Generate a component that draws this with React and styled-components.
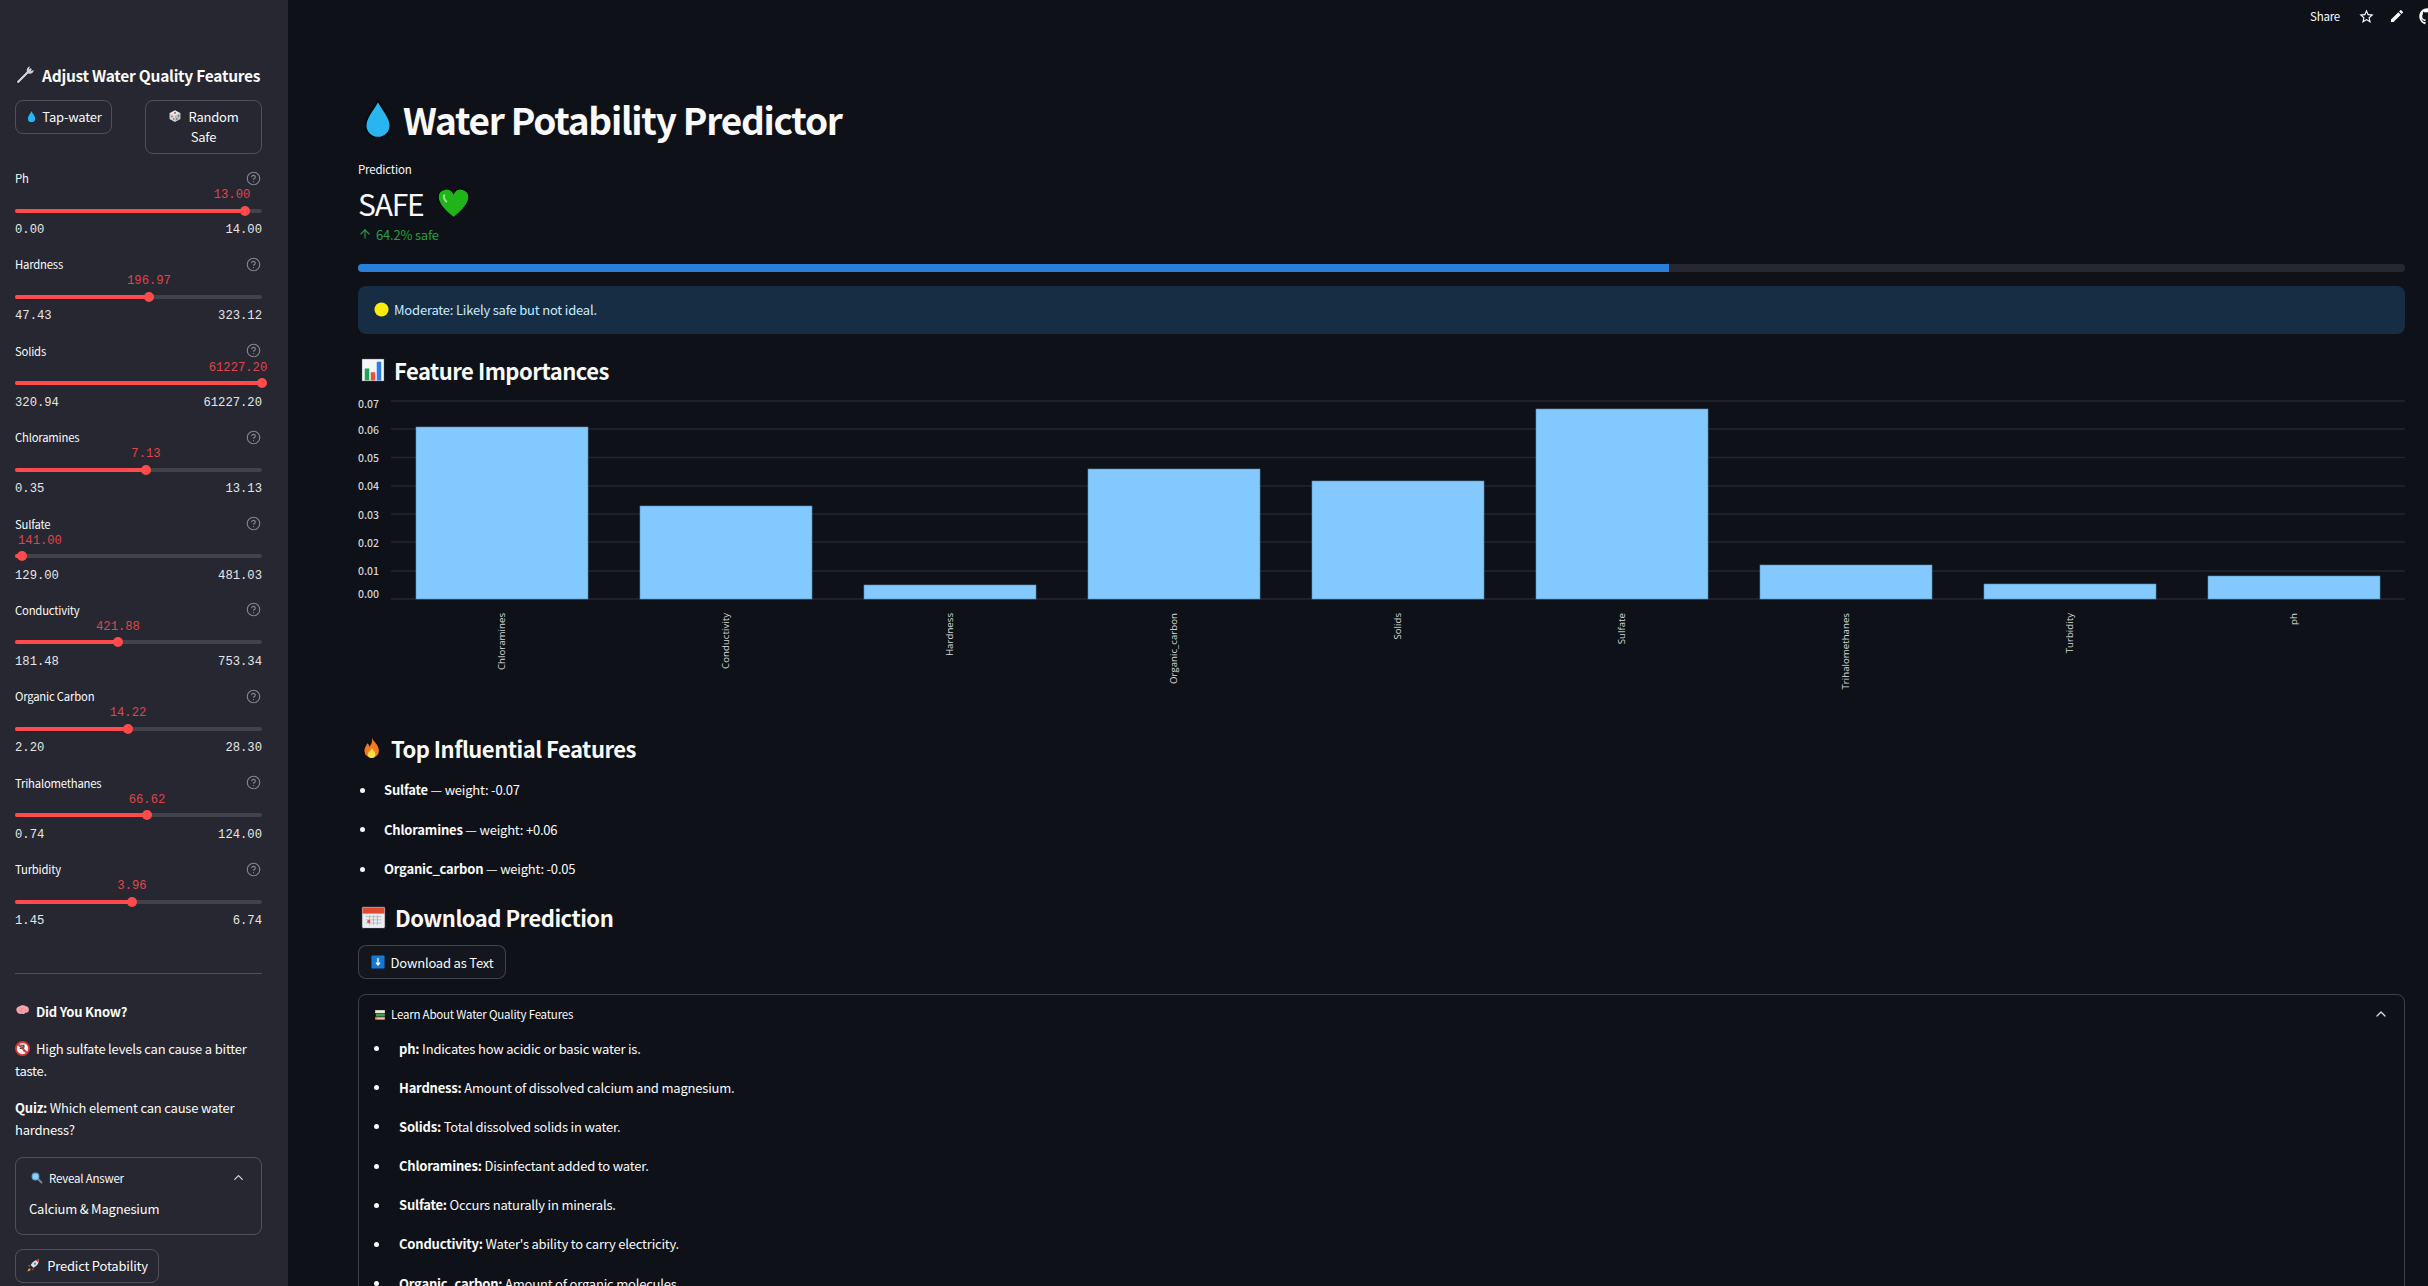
import React from "react";
import styled, { createGlobalStyle } from "styled-components";
import { CircleHelp, ChevronUp, ArrowUp } from "lucide-react";
import { MdEdit, MdStarBorder } from "react-icons/md";
import { FaGithub } from "react-icons/fa";

const sliders = [
  { name: "Ph", value: "13.00", min: "0.00", max: "14.00", thumb: 229.5, label: 217 },
  { name: "Hardness", value: "196.97", min: "47.43", max: "323.12", thumb: 134, label: 134 },
  { name: "Solids", value: "61227.20", min: "320.94", max: "61227.20", thumb: 247, label: 223 },
  { name: "Chloramines", value: "7.13", min: "0.35", max: "13.13", thumb: 130.5, label: 131 },
  { name: "Sulfate", value: "141.00", min: "129.00", max: "481.03", thumb: 7, label: 25 },
  { name: "Conductivity", value: "421.88", min: "181.48", max: "753.34", thumb: 103, label: 103 },
  { name: "Organic Carbon", value: "14.22", min: "2.20", max: "28.30", thumb: 113, label: 113 },
  { name: "Trihalomethanes", value: "66.62", min: "0.74", max: "124.00", thumb: 131.5, label: 132 },
  { name: "Turbidity", value: "3.96", min: "1.45", max: "6.74", thumb: 117, label: 117 },
];

const bars = [
  { name: "Chloramines", top: 427 },
  { name: "Conductivity", top: 506 },
  { name: "Hardness", top: 585 },
  { name: "Organic_carbon", top: 469 },
  { name: "Solids", top: 481 },
  { name: "Sulfate", top: 409 },
  { name: "Trihalomethanes", top: 565 },
  { name: "Turbidity", top: 584 },
  { name: "ph", top: 576 },
];

const ticks = [
  { label: "0.07", line: 401, text: 404 },
  { label: "0.06", line: 429, text: 430 },
  { label: "0.05", line: 457.5, text: 458 },
  { label: "0.04", line: 486, text: 486 },
  { label: "0.03", line: 514, text: 515 },
  { label: "0.02", line: 542, text: 543 },
  { label: "0.01", line: 571, text: 571 },
  { label: "0.00", line: 599, text: 594 },
];

const topFeatures = [
  { name: "Sulfate", weight: "-0.07" },
  { name: "Chloramines", weight: "+0.06" },
  { name: "Organic_carbon", weight: "-0.05" },
];

const glossary = [
  { name: "ph", text: "Indicates how acidic or basic water is." },
  { name: "Hardness", text: "Amount of dissolved calcium and magnesium." },
  { name: "Solids", text: "Total dissolved solids in water." },
  { name: "Chloramines", text: "Disinfectant added to water." },
  { name: "Sulfate", text: "Occurs naturally in minerals." },
  { name: "Conductivity", text: "Water's ability to carry electricity." },
  { name: "Organic_carbon", text: "Amount of organic molecules." },
];

const drawings = {
  drop: (
    <path d="M16 1C13 8 6 14 6 21a10 10 0 0 0 20 0C26 14 19 8 16 1z" fill="#29b6f0" stroke="#06090d" strokeWidth="1.5" />
  ),
  wrench: (
    <>
      <path d="M5 27 25 7" stroke="#15161a" strokeWidth="6" strokeLinecap="round" />
      <path d="M5 27 25 7" stroke="#cfd3d6" strokeWidth="3.5" strokeLinecap="round" />
      <path d="M24 2l-2 5 3 3 5-2c0 4-4 7-8 6l-3-3c-1-4 1-8 5-9z" fill="#cfd3d6" />
    </>
  ),
  dice: (
    <>
      <path d="M16 3l12 6v14l-12 6-12-6V9z" fill="#e9e9e9" />
      <path d="M16 15l12-6v14l-12 6z" fill="#bdbdbd" />
      <path d="M4 9l12 6v14L4 23z" fill="#d4d4d4" />
      <circle cx="16" cy="9" r="2" fill="#a33" />
      <circle cx="9" cy="17" r="1.6" fill="#555" />
      <circle cx="13" cy="23" r="1.6" fill="#555" />
      <circle cx="20" cy="23" r="1.6" fill="#555" />
      <circle cx="24" cy="16" r="1.6" fill="#555" />
    </>
  ),
  heart: (
    <>
      <path d="M16 30C6 22 1 16 1 10a8 8 0 0 1 15-4 8 8 0 0 1 15 4c0 6-5 12-15 20z" fill="#1fb51a" stroke="#06090d" strokeWidth="1.4" />
      <path d="M7 8c-1 2 0 4 2 6" stroke="#8fe08a" strokeWidth="2" fill="none" strokeLinecap="round" />
    </>
  ),
  circle: <circle cx="16" cy="16" r="15" fill="#fcea0a" />,
  chart: (
    <>
      <rect x="1" y="1" width="30" height="30" fill="#f4f6f8" stroke="#06090d" />
      <rect x="5" y="14" width="6" height="16" fill="#1fa35a" />
      <rect x="13" y="19" width="6" height="11" fill="#e8503a" />
      <rect x="21" y="5" width="6" height="25" fill="#2a7de1" />
    </>
  ),
  fire: (
    <>
      <path d="M16 1c2 6 10 10 10 19a10.500 10.500 0 0 1-21 0c0-5 3-7 4-11 2 1 3 3 3 5 3-3 5-7 4-13z" fill="#f4791f" />
      <path d="M16 16c1 3 5 5 5 9a5.500 5.500 0 0 1-11 0c0-4 5-5 6-9z" fill="#fde047" />
    </>
  ),
  calendar: (
    <>
      <rect x="1" y="2" width="30" height="28" rx="2" fill="#eceff1" stroke="#06090d" />
      <rect x="2" y="3" width="28" height="8" fill="#e2492f" />
      <path d="M6 15h20M6 19h20M6 23h20M11 13v13M16 13v13M21 13v13" stroke="#a9b0b6" strokeWidth="1" />
      <circle cx="10" cy="21" r="2" fill="#d9534f" />
    </>
  ),
  download: (
    <>
      <rect x="1" y="1" width="30" height="30" rx="2" fill="#1478d4" />
      <path d="M16 7v15M11.500 17.500 16 23l4.500-5.500" stroke="#fff" strokeWidth="3" fill="none" />
    </>
  ),
  brain: (
    <>
      <path d="M4 18c-3-5 1-11 6-11 3-3 10-3 13 0 5 0 8 5 6 10-1 4-5 4-7 3-1 3-4 4-6 3-4 1-10 0-12-5z" fill="#f3a6a9" />
      <path d="M11 11c2 2 5 2 7 0M9 17c3-1 5 0 7 2M20 15c2 0 4 0 5 2" stroke="#d5757b" strokeWidth="1.5" fill="none" />
    </>
  ),
  noWater: (
    <>
      <circle cx="16" cy="16" r="14" fill="#f5f5f5" stroke="#d83a32" strokeWidth="4" />
      <path d="M11 9h8v4h-3v3M10 16h8l2 7" stroke="#33363b" strokeWidth="2.5" fill="none" />
      <path d="M6 6l20 20" stroke="#d83a32" strokeWidth="4" />
    </>
  ),
  search: (
    <>
      <path d="M18 18l10 10" stroke="#7d8a95" strokeWidth="5" strokeLinecap="round" />
      <circle cx="12" cy="12" r="9" fill="#8ed1f5" stroke="#5ea6d0" strokeWidth="3" />
    </>
  ),
  rocket: (
    <>
      <path d="M28 3c-8 0-14 5-18 12l6 6c7-4 12-10 12-18z" fill="#dfe5ea" />
      <path d="M28 3c-3 0-5 1-7 2l5 5c1-2 2-4 2-7z" fill="#d9352c" />
      <circle cx="19" cy="12" r="2.500" fill="#3f87c7" />
      <path d="M10 15l-6 1 3 3zM16 21l-1 6-3-3z" fill="#d9352c" />
      <path d="M8 22c-3 1-4 4-5 7 3-1 6-2 7-5z" fill="#f5a623" />
    </>
  ),
  books: (
    <>
      <rect x="3" y="3" width="26" height="8" fill="#dfe7c8" />
      <rect x="5" y="12" width="24" height="8" fill="#3c9a5f" />
      <rect x="3" y="21" width="26" height="8" fill="#ec7a2e" />
      <path d="M8 25h20M8 7h20" stroke="#f4f4f4" strokeWidth="2" />
    </>
  ),
};

const Emoji = ({ name, size = 16, gap = 0 }) => (
  <EmojiSvg viewBox="0 0 32 32" fill="none" $size={size} $gap={gap} aria-hidden="true">
    {drawings[name]}
  </EmojiSvg>
);

const FeatureChart = () => (
  <ChartSvg viewBox="358 390 2047 300" role="img" aria-label="Feature importances">
    {ticks.map((t) => (
      <g key={t.label}>
        <line x1="391" x2="2405" y1={t.line} y2={t.line} stroke="#23262e" strokeWidth="1.5" />
        <text x="358" y={t.text + 3.5} fontSize="10.5" fontWeight="500" fill="#d2d4d8" fontFamily="'Noto Sans CJK SC', sans-serif">
          {t.label}
        </text>
      </g>
    ))}
    {bars.map((b, i) => {
      const x = 416 + i * 224;
      return (
        <g key={b.name}>
          <rect x={x} y={b.top} width="172" height={599 - b.top} fill="#83c9ff" stroke="#5f8fb5" strokeWidth="0.6" />
          <text
            transform={`translate(${x + 89} 613) rotate(-90)`}
            textAnchor="end"
            fontSize="9.7"
            fill="#d6d8dc"
            fontFamily="'Open Sans', sans-serif"
          >
            {b.name}
          </text>
        </g>
      );
    })}
  </ChartSvg>
);

const FeatureSlider = ({ name, value, min, max, thumb, label }) => (
  <SliderBlock>
    <LabelRow>
      <SliderName>{name}</SliderName>
      <CircleHelp size={15} color="#85868d" strokeWidth={1.8} />
    </LabelRow>
    <Track>
      <TrackFill style={{ width: thumb }} />
      <Thumb style={{ left: thumb }} />
      <ThumbValue style={{ left: label }}>{value}</ThumbValue>
    </Track>
    <TickRow>
      <span>{min}</span>
      <span>{max}</span>
    </TickRow>
  </SliderBlock>
);

export default function App() {
  return (
    <>
      <GlobalStyle />
      <Page>
        <Sidebar>
          <SidebarTitle>
            <Emoji name="wrench" size={20} gap={7} />
            Adjust Water Quality Features
          </SidebarTitle>
          <PresetRow>
            <Button $width={97}>
              <Emoji name="drop" size={13} gap={4} />
              Tap-water
            </Button>
            <Button $width={117}>
              <span>
                <Emoji name="dice" size={14} gap={6} />
                Random
                <br />
                Safe
              </span>
            </Button>
          </PresetRow>
          {sliders.map((s) => (
            <FeatureSlider key={s.name} {...s} />
          ))}
          <Divider />
          <SideText $top={27}>
            <Emoji name="brain" size={15} gap={6} />
            <strong>Did You Know?</strong>
          </SideText>
          <SideText $top={15}>
            <Emoji name="noWater" size={15} gap={6} />
            High sulfate levels can cause a bitter taste.
          </SideText>
          <SideText $top={14}>
            <strong>Quiz:</strong> Which element can cause water hardness?
          </SideText>
          <SideExpander>
            <ExpanderHead>
              <span>
                <Emoji name="search" size={12} gap={6} />
                Reveal Answer
              </span>
              <ChevronUp size={15} color="#d8d8da" />
            </ExpanderHead>
            <Answer>Calcium &amp; Magnesium</Answer>
          </SideExpander>
          <Button $width={144} $top={14}>
            <Emoji name="rocket" size={15} gap={6} />
            Predict Potability
          </Button>
        </Sidebar>
        <Main>
          <Toolbar>
            <ShareLink>Share</ShareLink>
            <MdStarBorder size={17} />
            <MdEdit size={16} />
            <FaGithub size={17} />
          </Toolbar>
          <Title>
            <Emoji name="drop" size={40} />
            <span>Water Potability Predictor</span>
          </Title>
          <MetricLabel>Prediction</MetricLabel>
          <MetricValue>
            SAFE
            <Emoji name="heart" size={33} />
          </MetricValue>
          <MetricDelta>
            <ArrowUp size={14} strokeWidth={2} />
            64.2% safe
          </MetricDelta>
          <Progress>
            <ProgressFill style={{ width: `${64.2 - 0.15}%` }} />
          </Progress>
          <Alert>
            <Emoji name="circle" size={15} gap={5} />
            Moderate: Likely safe but not ideal.
          </Alert>
          <Heading $top={20}>
            <Emoji name="chart" size={24} gap={9} />
            Feature Importances
          </Heading>
          <FeatureChart />
          <Heading $top={42}>
            <Emoji name="fire" size={22} gap={8} />
            Top Influential Features
          </Heading>
          <BulletList>
            {topFeatures.map((f) => (
              <li key={f.name}>
                <strong>{f.name}</strong> — weight: {f.weight}
              </li>
            ))}
          </BulletList>
          <Heading $top={21}>
            <Emoji name="calendar" size={25} gap={9} />
            Download Prediction
          </Heading>
          <DownloadButton>
            <Emoji name="download" size={14} gap={6} />
            Download as Text
          </DownloadButton>
          <MainExpander>
            <ExpanderHead>
              <span>
                <Emoji name="books" size={12} gap={5} />
                Learn About Water Quality Features
              </span>
              <ChevronUp size={16} color="#d8d8da" />
            </ExpanderHead>
            <GlossaryList>
              {glossary.map((g) => (
                <li key={g.name}>
                  <strong>{g.name}:</strong> {g.text}
                </li>
              ))}
            </GlossaryList>
          </MainExpander>
        </Main>
      </Page>
    </>
  );
}

const GlobalStyle = createGlobalStyle`
  * {
    box-sizing: border-box;
  }
  body {
    margin: 0;
    background: #0e1117;
    color: #fafafa;
    font-family: "Noto Sans CJK SC", "Noto Sans", sans-serif;
    font-size: 13px;
    letter-spacing: -0.2px;
  }
  strong {
    font-weight: 700;
  }
`;

const Page = styled.div`
  display: flex;
  height: 1286px;
  overflow: hidden;
`;

const Sidebar = styled.aside`
  flex: none;
  width: 288px;
  padding: 63px 26px 0 15px;
  background: #262730;
  overflow: hidden;
`;

const Main = styled.main`
  flex: 1;
  min-width: 0;
  padding: 0 23px 0 70px;
  overflow: hidden;
`;

const EmojiSvg = styled.svg`
  flex: none;
  display: inline-block;
  vertical-align: -0.15em;
  width: ${(p) => p.$size}px;
  height: ${(p) => p.$size}px;
  margin-right: ${(p) => p.$gap}px;
`;

const SidebarTitle = styled.h3`
  display: flex;
  align-items: center;
  margin: 0;
  height: 24px;
  font-size: 15.5px;
  font-weight: 700;
  letter-spacing: -0.26px;
  line-height: 24px;
  white-space: nowrap;
`;

const PresetRow = styled.div`
  display: flex;
  justify-content: space-between;
  align-items: flex-start;
  margin-top: 13px;
  margin-bottom: 14px;
`;

const Button = styled.button`
  display: flex;
  align-items: center;
  justify-content: center;
  width: ${(p) => p.$width}px;
  margin-top: ${(p) => p.$top || 0}px;
  padding: 5.5px 6px;
  background: transparent;
  border: 1px solid rgba(250, 250, 250, 0.2);
  border-radius: 8px;
  color: #fafafa;
  font: inherit;
  letter-spacing: inherit;
  line-height: 20.5px;
  white-space: nowrap;
`;

const SliderBlock = styled.div`
  height: 86.4px;
`;

const LabelRow = styled.div`
  display: flex;
  justify-content: space-between;
  align-items: center;
  height: 20px;
  padding-right: 1px;
`;

const SliderName = styled.span`
  font-size: 11.3px;
  line-height: 20px;
  color: #fafafa;
`;

const Track = styled.div`
  position: relative;
  height: 4px;
  margin-top: 20.5px;
  border-radius: 2px;
  background: #41424b;
`;

const TrackFill = styled.div`
  height: 100%;
  border-radius: 2px;
  background: #ff4b4b;
`;

const Thumb = styled.div`
  position: absolute;
  top: -3px;
  width: 10px;
  height: 10px;
  margin-left: -5px;
  border-radius: 50%;
  background: #ff4b4b;
`;

const ThumbValue = styled.div`
  position: absolute;
  top: -21.5px;
  transform: translateX(-50%);
  font-family: "Liberation Mono", monospace;
  font-size: 12.2px;
  letter-spacing: 0;
  line-height: 16px;
  color: #e0454c;
  white-space: nowrap;
`;

const TickRow = styled.div`
  display: flex;
  justify-content: space-between;
  margin-top: 9.5px;
  font-family: "Liberation Mono", monospace;
  font-size: 12.2px;
  letter-spacing: 0;
  line-height: 16px;
  color: #e6e6e8;
`;

const Divider = styled.hr`
  margin: 27px 0 0;
  border: 0;
  border-top: 1px solid rgba(250, 250, 250, 0.2);
`;

const SideText = styled.p`
  margin: ${(p) => p.$top}px 0 0;
  line-height: 22.4px;
`;

const SideExpander = styled.div`
  margin-top: 15.5px;
  height: 78px;
  border: 1px solid rgba(250, 250, 250, 0.2);
  border-radius: 8px;
`;

const ExpanderHead = styled.div`
  display: flex;
  justify-content: space-between;
  align-items: center;
  padding: 6px 15px 0 15px;
  height: 33px;
  font-size: 11.5px;
  line-height: 20px;
`;

const Answer = styled.div`
  padding: 7px 0 0 13px;
  line-height: 22px;
`;

const Toolbar = styled.header`
  display: flex;
  align-items: center;
  justify-content: flex-end;
  gap: 14px;
  height: 32px;
  margin-right: -31px;
  color: #fafafa;
`;

const ShareLink = styled.span`
  margin-right: 4px;
  font-size: 11.5px;
`;

const Title = styled.h1`
  display: flex;
  align-items: center;
  gap: 5px;
  margin: 57px 0 0;
  height: 60px;
  font-size: 37px;
  font-weight: 700;
  letter-spacing: -1.25px;
  line-height: 60px;
`;

const MetricLabel = styled.div`
  margin-top: 11px;
  font-size: 11.5px;
  line-height: 18px;
`;

const MetricValue = styled.div`
  display: flex;
  align-items: center;
  gap: 13px;
  margin-top: 3px;
  height: 44px;
  font-size: 30px;
  letter-spacing: -1.2px;
  line-height: 44px;
`;

const MetricDelta = styled.div`
  display: flex;
  align-items: center;
  gap: 4px;
  height: 18px;
  color: #23a03f;
`;

const Progress = styled.div`
  margin-top: 21px;
  height: 8px;
  border-radius: 4px;
  background: #262730;
  overflow: hidden;
`;

const ProgressFill = styled.div`
  height: 100%;
  background: #2a80d9;
`;

const Alert = styled.div`
  display: flex;
  align-items: center;
  margin-top: 14px;
  height: 48px;
  padding: 0 0 2px 16px;
  border-radius: 8px;
  background: #172d43;
  color: #c7ebff;
`;

const Heading = styled.h2`
  display: flex;
  align-items: center;
  margin: ${(p) => p.$top}px 0 0;
  height: 32px;
  padding-left: 3px;
  font-size: 22px;
  font-weight: 600;
  letter-spacing: -0.5px;
  line-height: 32px;
`;

const ChartSvg = styled.svg`
  display: block;
  margin-top: 4px;
  width: 100%;
  height: 300px;
  letter-spacing: 0;
`;

const BulletItems = styled.ul`
  margin: 0;
  padding: 0;
  list-style: none;
  li {
    position: relative;
    line-height: 22px;
  }
  li::before {
    content: "";
    position: absolute;
    top: 8.5px;
    width: 5px;
    height: 5px;
    border-radius: 50%;
    background: #fafafa;
  }
`;

const BulletList = styled(BulletItems)`
  margin-top: 15px;
  padding-left: 26px;
  li {
    margin-bottom: 17.5px;
  }
  li:last-child {
    margin-bottom: 0;
  }
  li::before {
    left: -24.5px;
  }
`;

const DownloadButton = styled.button`
  display: flex;
  align-items: center;
  justify-content: center;
  width: 148px;
  height: 34px;
  margin-top: 12px;
  background: #13161d;
  border: 1px solid rgba(250, 250, 250, 0.2);
  border-radius: 8px;
  color: #fafafa;
  font: inherit;
  letter-spacing: inherit;
  white-space: nowrap;
`;

const MainExpander = styled.section`
  margin-top: 14.5px;
  height: 400px;
  border: 1px solid rgba(250, 250, 250, 0.2);
  border-radius: 8px;
`;

const GlossaryList = styled(BulletItems)`
  margin-top: 10px;
  padding-left: 40px;
  li {
    margin-bottom: 17.2px;
  }
  li::before {
    left: -25px;
  }
`;
